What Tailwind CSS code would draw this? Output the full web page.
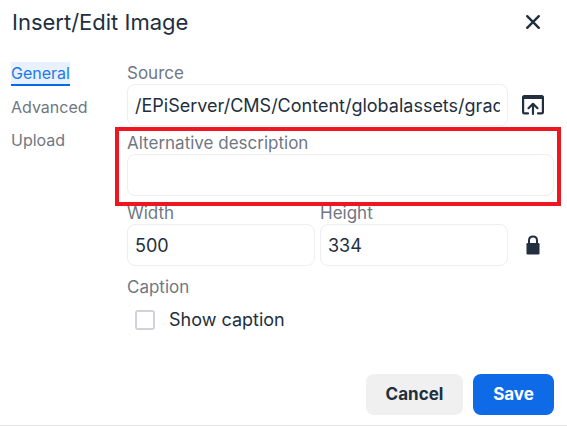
<!DOCTYPE html>
<html lang="en">
  <head>
    <meta charset="UTF-8" />
    <meta name="viewport" content="width=device-width, initial-scale=1.0" />
    <title>Insert/Edit Image</title>
    <script src="https://cdn.jsdelivr.net/npm/@tailwindcss/browser@4"></script>
  </head>
  <body class="bg-white font-['Inter',sans-serif] text-[#222f3e]">

    <form class="border-b border-[#e3e3e3]">
      <!-- Header -->
      <header class="flex items-center justify-between h-11 pl-3 pr-[22px]">
        <h1 class="text-[22px] leading-7">Insert/Edit Image</h1>
        <button type="button" aria-label="Close" class="p-1">
          <svg class="size-4" viewBox="0 0 16 16" fill="none" stroke="currentColor" stroke-width="2.4" stroke-linecap="round"><path d="M2.2 2.2 13.8 13.8M13.8 2.2 2.2 13.8" /></svg>
        </button>
      </header>

      <div class="flex pt-[18px] pl-[11px] pr-[13px] text-[17px] leading-[22px] text-[#6f7783]">
        <!-- Tabs -->
        <nav class="flex flex-col items-start gap-[11px] w-[116px] shrink-0 text-[16px]">
          <a href="#general" class="-mb-px bg-[#e8f1fd] border-b-2 border-[#006ce7] text-[#207ae9]">General</a>
          <a href="#advanced">Advanced</a>
          <a href="#upload">Upload</a>
        </nav>

        <!-- Fields -->
        <div class="flex flex-col flex-1 min-w-0 gap-[6px]">
          <div>
            <label for="source" class="block">Source</label>
            <div class="flex items-center">
              <input id="source" type="text" value="/EPiServer/CMS/Content/globalassets/graduation.jpg" class="flex-1 min-w-0 h-[42px] px-[7px] border border-[#eeeeee] rounded-lg text-[18px] text-[#222f3e]" />
              <button type="button" aria-label="Browse files" class="flex justify-center w-[46px] pl-1 text-[#222f3e]">
                <svg class="size-6" viewBox="0 0 24 24" fill="none" stroke="currentColor" stroke-width="2.2" stroke-linejoin="round" stroke-linecap="round"><path d="M7 20.4H3.6Q2.1 20.4 2.1 19V4.5Q2.1 3 3.6 3H20.4Q21.9 3 21.9 4.5V19Q21.9 20.4 20.4 20.4H17" /><path d="M3 4.3H21" stroke-width="3.6" /><path d="M12 21V11.5M7.5 15.2 12 10.8 16.5 15.2" /></svg>
              </button>
            </div>
          </div>

          <div class="relative">
            <label for="alt" class="block">Alternative description</label>
            <input id="alt" type="text" class="block w-full h-[42px] px-[7px] border border-[#eeeeee] rounded-lg text-[18px] text-[#222f3e]" />
            <!-- Highlight frame -->
            <div class="absolute -left-3 -right-[7px] -top-[5px] -bottom-[10px] border-4 border-[#ee1620] pointer-events-none"></div>
          </div>

          <div class="flex items-end">
            <div class="grid grid-cols-2 gap-[5px] flex-1 min-w-0">
              <div>
                <label for="width" class="block">Width</label>
                <input id="width" type="text" value="500" class="block w-full h-[42px] px-[7px] border border-[#eeeeee] rounded-lg text-[18px] text-[#222f3e]" />
              </div>
              <div>
                <label for="height" class="block">Height</label>
                <input id="height" type="text" value="334" class="block w-full h-[42px] px-[7px] border border-[#eeeeee] rounded-lg text-[18px] text-[#222f3e]" />
              </div>
            </div>
            <button type="button" aria-label="Constrain proportions" class="flex justify-center items-center w-[46px] h-[42px] pl-1 text-[#222f3e]">
              <svg class="w-[14px] h-5" viewBox="0 0 14 20"><rect x="0.5" y="8" width="13" height="11.5" rx="1.2" fill="currentColor" /><path d="M3 9V5.5Q3 1.6 7 1.6T11 5.5V9" fill="none" stroke="currentColor" stroke-width="2" /></svg>
            </button>
          </div>

          <fieldset class="pt-1">
            <legend class="float-left w-full">Caption</legend>
            <div class="clear-both flex items-center gap-[14px] h-11 pl-2">
              <input id="caption" type="checkbox" class="appearance-none size-5 border-2 border-[#d0d3d7] rounded-[3px] bg-white" />
              <label for="caption" class="text-[18px] text-[#222f3e]">Show caption</label>
            </div>
          </fieldset>
        </div>
      </div>

      <!-- Footer -->
      <footer class="flex justify-end gap-[10px] pt-8 pb-[10px] pr-[13px] text-[17px] font-bold">
        <button type="button" class="w-[97px] h-[41px] rounded-lg bg-[#f0f0f0]">Cancel</button>
        <button type="submit" class="w-[81px] h-[41px] rounded-lg bg-[#0f6ae8] text-white">Save</button>
      </footer>
    </form>

  </body>
</html>
